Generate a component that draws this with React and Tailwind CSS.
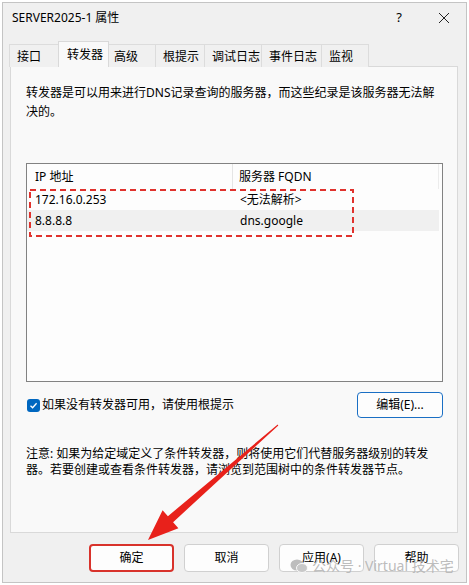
import React from 'react'

const tabs = [
  { label: '接口', w: 'w-[51px]' },
  { label: '转发器', w: 'w-[51px]', active: true },
  { label: '高级', w: 'w-[49px]' },
  { label: '根提示', w: 'w-[49px]' },
  { label: '调试日志', w: 'w-[57px]' },
  { label: '事件日志', w: 'w-[60px]' },
  { label: '监视', w: 'w-[47px]' },
]

const rows = [
  { ip: '172.16.0.253', fqdn: '<无法解析>' },
  { ip: '8.8.8.8', fqdn: 'dns.google', shade: true },
]

const Btn = ({ children, red }) => (
  <button
    className={
      'w-[85px] h-[28px] rounded-[4px] bg-[#fdfdfd] text-[12px] text-black ' +
      (red ? 'border-2 border-[#d8322b]' : 'border border-[#d0d0d0]')
    }
  >
    {children}
  </button>
)

export default function App() {
  return (
    <div
      className="relative w-[469px] h-[585px] bg-white overflow-hidden text-[12px] text-black"
      style={{ fontFamily: '"Noto Sans", "Noto Sans CJK SC", sans-serif' }}
    >
      <div className="absolute left-[2px] top-[2px] w-[465px] h-[581px] border border-[#c4c4c4] bg-[#f0f0f0] flex flex-col">
        {/* title bar */}
        <div className="h-[30px] flex items-center pl-[9px] shrink-0">
          <span className="flex-1">SERVER2025-1 属性</span>
          <span className="w-[30px] text-center text-[13px] mr-[24px]">?</span>
          <svg width="12" height="12" viewBox="0 0 12 12" className="mr-[16px]">
            <path d="M1 1 L11 11 M11 1 L1 11" stroke="#222" strokeWidth="1" />
          </svg>
        </div>

        {/* tabs */}
        <div className="mt-[9px] h-[25px] flex items-end pl-[6px] relative z-10 -mb-px shrink-0">
          {tabs.map((t) =>
            t.active ? (
              <div
                key={t.label}
                className={t.w + ' -mx-[2px] h-[26px] pl-[8px] pt-[4px] bg-[#f9f9f9] border border-b-0 border-[#d9d9d9] relative z-10'}
              >
                {t.label}
              </div>
            ) : (
              <div
                key={t.label}
                className={t.w + ' h-[23px] pl-[7px] pt-[3px] bg-[#f0f0f0] border border-l-0 first:border-l border-b-0 border-[#dcdcdc]'}
              >
                {t.label}
              </div>
            )
          )}
        </div>

        {/* panel */}
        <div className="ml-[7px] mr-[8px] h-[467px] border border-[#d9d9d9] bg-[#f9f9f9] pl-[15px] pr-[14px] shrink-0">
          <p className="pt-[16px] leading-[19px]">
            转发器是可以用来进行DNS记录查询的服务器，而这些纪录是该服务器无法解
            <br />
            决的。
          </p>

          <div className="mt-[42px] w-[417px] h-[219px] border border-[#828282] bg-[#fdfdfd]">
            <div className="h-[25px] flex items-center">
              <div className="w-[206px] h-full pl-[8px] flex items-center border-r border-[#e5e5e5]">IP 地址</div>
              <div className="w-[206px] h-full pl-[6px] flex items-center border-r border-[#ececec]">服务器 FQDN</div>
            </div>
            {rows.map((r) => (
              <div
                key={r.ip}
                className={'w-[412px] h-[21px] flex items-center ' + (r.shade ? 'bg-[#f0f0f0]' : '')}
              >
                <div className="w-[207px] pl-[8px]">{r.ip}</div>
                <div className="pl-[6px]">{r.fqdn}</div>
              </div>
            ))}
          </div>

          <div className="mt-[10px] h-[26px] flex items-center justify-between">
            <label className="flex items-center gap-[2px] pl-px">
              <span className="w-[13px] h-[13px] rounded-[3px] bg-[#0067c0] flex items-center justify-center">
                <svg width="9" height="9" viewBox="0 0 9 9">
                  <path d="M1.5 4.8 L3.6 6.8 L7.6 2.2" stroke="white" strokeWidth="1.3" fill="none" />
                </svg>
              </span>
              如果没有转发器可用，请使用根提示
            </label>
            <button className="w-[86px] h-[26px] rounded-[4px] border border-[#1a6fc4] bg-[#fdfdfd] text-[12px]">
              编辑(E)...
            </button>
          </div>

          <p className="mt-[28px] leading-[16px]">
            注意: 如果为给定域定义了条件转发器，则将使用它们代替服务器级别的转发
            <br />
            器。若要创建或查看条件转发器，请浏览到范围树中的条件转发器节点。
          </p>
        </div>

        {/* bottom buttons */}
        <div className="mt-[11px] flex justify-end gap-[10px] pr-[7px]">
          <Btn red>确定</Btn>
          <Btn>取消</Btn>
          <Btn>应用(A)</Btn>
          <Btn>帮助</Btn>
        </div>
      </div>

      {/* annotations */}
      <svg className="absolute inset-0 pointer-events-none" width="469" height="585">
        <rect x="30" y="190" width="323" height="46" fill="none" stroke="#e0322d" strokeWidth="2" strokeDasharray="6 4" />
        <polygon
          points="148,540 162.6,510.2 167.9,516.2 277.7,424.6 278.3,425.4 173.1,522.2 178.4,528.2"
          fill="#e8211b"
        />
      </svg>

      <div className="absolute left-[290px] top-[555px] flex items-center gap-[4px] text-[14px] text-[#b4b4b4]/90 pointer-events-none">
        <svg width="18" height="16" viewBox="0 0 18 16">
          <ellipse cx="7" cy="7" rx="6.5" ry="5.5" fill="#bdbdbd" />
          <ellipse cx="12" cy="10" rx="5.5" ry="4.5" fill="#c8c8c8" stroke="#f9f9f9" strokeWidth="1" />
        </svg>
        <span>公众号 · Virtual 技术宅</span>
      </div>
    </div>
  )
}
